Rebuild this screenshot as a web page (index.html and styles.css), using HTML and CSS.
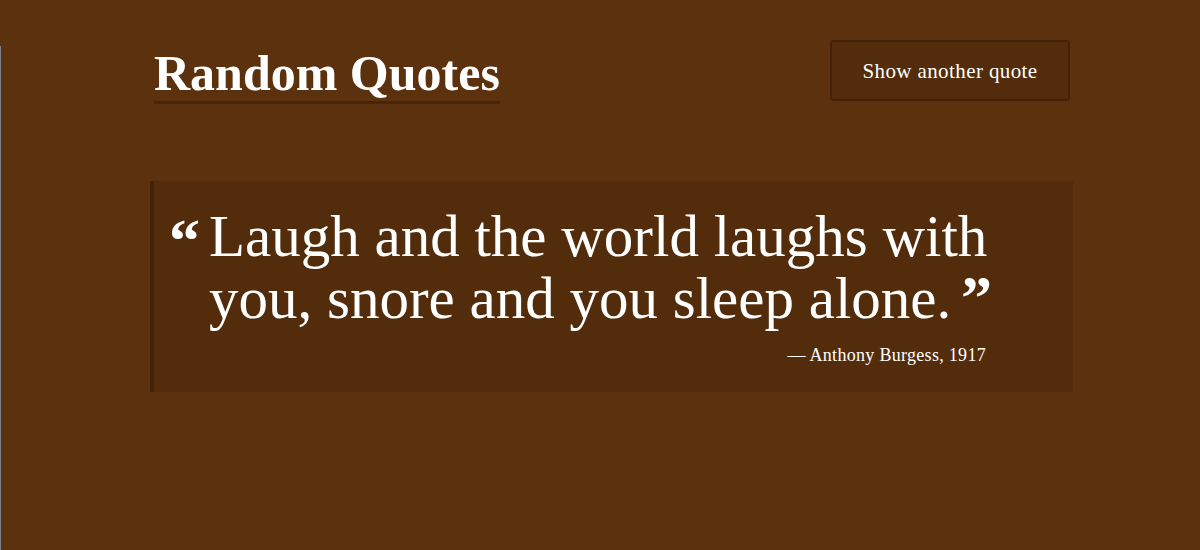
FILE: index.html
```html
<!DOCTYPE html>
<html lang="en">
<head>
<meta charset="utf-8">
<title>Random Quotes</title>
<link rel="stylesheet" href="styles.css">
</head>
<body>
<div class="page">
  <header class="header">
    <h1 class="title">Random Quotes</h1>
    <button class="btn" type="button">Show another quote</button>
  </header>
  <blockquote class="quote">
    <span class="qmark open">“</span>
    <div class="quote-body">
      <p class="quote-text">Laugh and the world laughs with you, snore and you sleep <span class="nowrap">alone. <span class="qmark close">”</span></span></p>
      <p class="cite">— Anthony Burgess, 1917</p>
    </div>
  </blockquote>
</div>
</body>
</html>
```

FILE: styles.css
```css
html, body {
  margin: 0;
  height: 100%;
}
body {
  background: #5c320e;
  color: #fff;
  font-family: "Liberation Serif", "Times New Roman", serif;
  position: relative;
}
body::before {
  content: "";
  position: absolute;
  left: 0;
  top: 46px;
  bottom: 0;
  width: 1px;
  background: #7d808a;
}
.page {
  padding: 40px 127px 0 150px;
}
.header {
  display: flex;
  justify-content: space-between;
  align-items: flex-start;
}
.title {
  margin: 8px 0 0 4px;
  font-size: 50px;
  line-height: 50px;
  font-weight: 700;
  padding-bottom: 3px;
  border-bottom: 3px solid #472509;
}
.btn {
  margin-right: 3px;
  width: 240px;
  height: 61px;
  padding-top: 3px;
  background: #532d0b;
  border: 2px solid #42230a;
  border-radius: 3px;
  color: #fff;
  font-family: inherit;
  font-size: 21px;
  letter-spacing: 0.4px;
  cursor: pointer;
}
.quote {
  margin: 77px 0 0;
  display: flex;
  background: #532d0b;
  border-left: 4px solid #42230a;
  padding: 24px 0 25px 15px;
}
.qmark {
  font-weight: 700;
  font-size: 62px;
  line-height: 0;
}
.qmark.open {
  width: 40px;
  flex: none;
  line-height: 70px;
}
.qmark.close {
  margin-left: -5px;
}
.nowrap {
  white-space: nowrap;
}
.quote-body {
  width: 800px;
}
.quote-text {
  margin: 0;
  font-size: 59px;
  line-height: 62px;
}
.cite {
  margin: 14px 0 0;
  text-align: right;
  font-size: 18px;
  line-height: 24px;
  letter-spacing: 0.3px;
  padding-right: 23px;
}
```
